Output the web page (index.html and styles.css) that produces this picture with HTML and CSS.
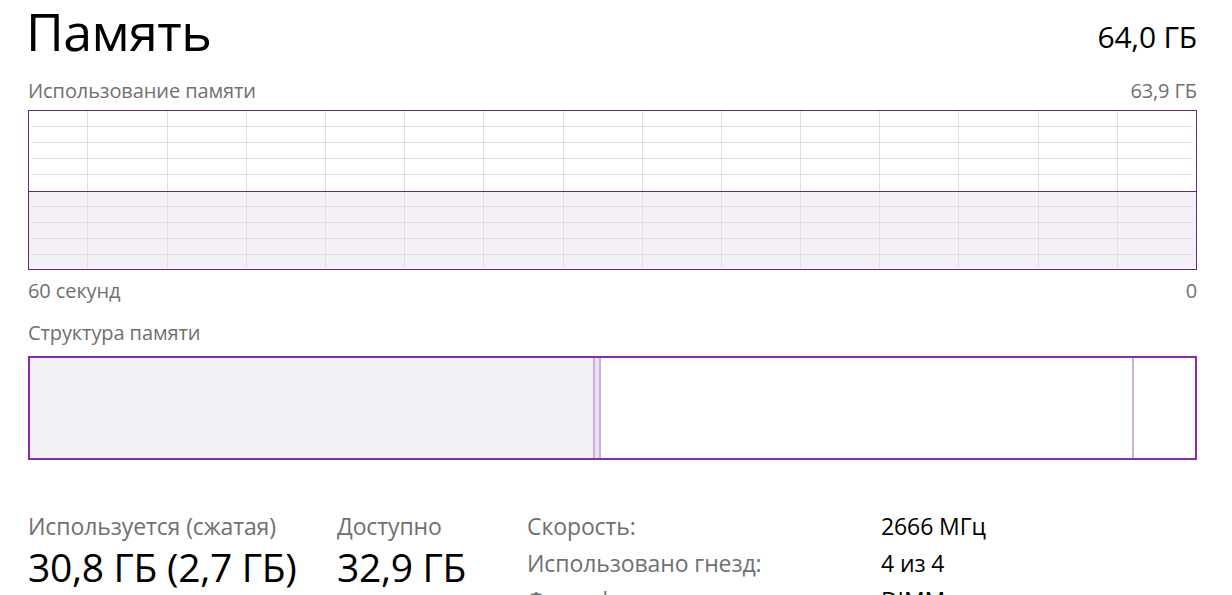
FILE: index.html
```html
<!DOCTYPE html>
<html lang="ru">
<head>
<meta charset="utf-8">
<title>Память</title>
<link rel="stylesheet" href="styles.css">
</head>
<body>
<main class="page">
  <header class="head">
    <h1 class="title">Память</h1>
    <div class="total">64,0 ГБ</div>
  </header>

  <div class="caption-row usage-caption">
    <span>Использование памяти</span>
    <span>63,9 ГБ</span>
  </div>

  <div class="chart">
    <svg width="1169" height="160" viewBox="0 0 1169 160" xmlns="http://www.w3.org/2000/svg">
      <rect class="fill" x="1" y="81" width="1167" height="78"/>
      <g class="grid">
        <line x1="4" y1="16.5" x2="1165" y2="16.5"/>
        <line x1="4" y1="32.5" x2="1165" y2="32.5"/>
        <line x1="4" y1="48.5" x2="1165" y2="48.5"/>
        <line x1="4" y1="64.5" x2="1165" y2="64.5"/>
        <line x1="4" y1="96.5" x2="1165" y2="96.5"/>
        <line x1="4" y1="112.5" x2="1165" y2="112.5"/>
        <line x1="4" y1="128.5" x2="1165" y2="128.5"/>
        <line x1="4" y1="144.5" x2="1165" y2="144.5"/>
        <line x1="59.5" y1="1" x2="59.5" y2="157"/>
        <line x1="139.5" y1="1" x2="139.5" y2="157"/>
        <line x1="218.5" y1="1" x2="218.5" y2="157"/>
        <line x1="297.5" y1="1" x2="297.5" y2="157"/>
        <line x1="376.5" y1="1" x2="376.5" y2="157"/>
        <line x1="455.5" y1="1" x2="455.5" y2="157"/>
        <line x1="535.5" y1="1" x2="535.5" y2="157"/>
        <line x1="614.5" y1="1" x2="614.5" y2="157"/>
        <line x1="693.5" y1="1" x2="693.5" y2="157"/>
        <line x1="772.5" y1="1" x2="772.5" y2="157"/>
        <line x1="851.5" y1="1" x2="851.5" y2="157"/>
        <line x1="930.5" y1="1" x2="930.5" y2="157"/>
        <line x1="1010.5" y1="1" x2="1010.5" y2="157"/>
        <line x1="1089.5" y1="1" x2="1089.5" y2="157"/>
      </g>
      <line class="level" x1="1" y1="81.5" x2="1168" y2="81.5"/>
      <rect class="frame" x="0.5" y="0.5" width="1168" height="159"/>
    </svg>
  </div>

  <div class="caption-row axis">
    <span>60 секунд</span>
    <span>0</span>
  </div>

  <div class="caption-row struct-caption">
    <span>Структура памяти</span>
  </div>

  <div class="composition">
    <div class="seg inuse"></div>
    <div class="sep"></div>
    <div class="seg modified"></div>
    <div class="sep"></div>
    <div class="seg standby"></div>
    <div class="sep"></div>
    <div class="seg free"></div>
  </div>

  <section class="stats">
    <div class="stat used">
      <div class="label">Используется (сжатая)</div>
      <div class="value">30,8 ГБ (2,7 ГБ)</div>
    </div>
    <div class="stat avail">
      <div class="label">Доступно</div>
      <div class="value">32,9 ГБ</div>
    </div>
    <dl class="props">
      <dt>Скорость:</dt><dd>2666 МГц</dd>
      <dt>Использовано гнезд:</dt><dd>4 из 4</dd>
      <dt>Форм-фактор:</dt><dd>DIMM</dd>
    </dl>
  </section>
</main>
</body>
</html>
```

FILE: styles.css
```css
html, body {
  margin: 0;
  padding: 0;
  background: #ffffff;
}

body {
  font-family: "Open Sans", "Noto Sans", sans-serif;
  color: #000000;
  overflow: hidden;
  height: 595px;
}

.page {
  padding: 0 35px 0 28px;
}

.head {
  display: flex;
  justify-content: space-between;
  align-items: flex-start;
  height: 60px;
}

.title {
  margin: -5px 0 0 -2px;
  font-weight: 400;
  font-size: 52px;
  line-height: 72px;
  letter-spacing: -0.6px;
}

.total {
  font-size: 30px;
  line-height: 56px;
  padding-top: 9px;
  letter-spacing: -0.2px;
}

.caption-row {
  display: flex;
  justify-content: space-between;
  font-size: 20px;
  line-height: 24px;
  height: 24px;
  color: #707070;
  letter-spacing: -0.1px;
}

.usage-caption {
  margin-top: 19px;
  margin-bottom: 7px;
}

.chart {
  height: 160px;
}

.chart svg {
  display: block;
}

.chart .fill {
  fill: #f4f0f6;
}

.chart .grid line {
  stroke: #e4dbe8;
  stroke-width: 1;
}

.chart .level {
  stroke: #66287c;
  stroke-width: 1;
}

.chart .frame {
  fill: none;
  stroke: #66287c;
  stroke-width: 1;
}

.axis {
  margin-top: 9px;
}

.struct-caption {
  margin-top: 18px;
}

.composition {
  margin-top: 11px;
  display: flex;
  width: 1169px;
  height: 104px;
  box-sizing: border-box;
  border: 2px solid #8a2ba6;
}

.seg {
  height: 100%;
}

.seg.inuse {
  width: 563px;
  background: #f3f0f5;
}

.seg.modified {
  width: 4px;
  background: #f0dff2;
}

.seg.standby {
  width: 531px;
  background: #ffffff;
}

.seg.free {
  flex: 1;
  background: #ffffff;
}

.sep {
  width: 2px;
  background: #c8b2d6;
}

.stats {
  margin-top: 51px;
  display: grid;
  grid-template-columns: 309px 190px 1fr;
  align-items: start;
}

.stat .label {
  font-size: 23px;
  line-height: 30px;
  color: #707070;
  letter-spacing: -0.1px;
}

.stat .value {
  font-size: 39px;
  line-height: 44px;
  margin-top: 4px;
  letter-spacing: -0.3px;
}

.props {
  margin: 0;
  display: grid;
  grid-template-columns: 354px 1fr;
  row-gap: 7px;
}

.props dt {
  font-size: 23px;
  line-height: 30px;
  color: #707070;
  letter-spacing: -0.1px;
}

.props dd {
  margin: 0;
  font-size: 23px;
  line-height: 30px;
  color: #000000;
  letter-spacing: -0.1px;
}
```
